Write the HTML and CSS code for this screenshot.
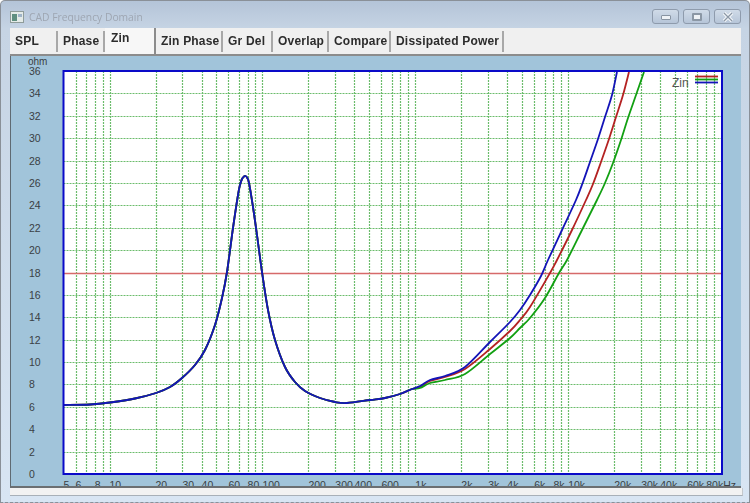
FILE: index.html
```html
<!DOCTYPE html>
<html>
    <head>
        <link rel="stylesheet" href="styles.css">
    </head>

    <body>
        <div class="window">
            <div class="titlebar">
                <svg class="app-icon" viewBox="0 0 14 12">
                    <rect x="0.5" y="0.5" width="13" height="11" fill="#e4ebe8" stroke="#8f9c9a"/>
                    <rect x="2" y="3" width="5" height="7" fill="#5f8f80"/>
                    <rect x="8" y="3" width="4" height="3" fill="#9fb4c8"/>
                </svg>
                <span class="title">CAD Frequency Domain</span>
                <div class="controls">
                    <div class="control"><span class="min-glyph"></span></div>
                    <div class="control"><span class="max-glyph"></span></div>
                    <div class="control close-glyph">
                        <svg viewBox="0 0 12 10" width="12" height="10">
                            <path d="M2 1 L10 9 M10 1 L2 9" stroke="#f4f7fa" stroke-width="3.4"/>
                            <path d="M2 1 L10 9 M10 1 L2 9" stroke="#8b97a5" stroke-width="1.2"/>
                        </svg>
                    </div>
                </div>
            </div>

            <div class="tabs">
                <div class="tab">SPL</div>
                <div class="tab">Phase</div>
                <div class="tab active">Zin</div>
                <div class="tab">Zin Phase</div>
                <div class="tab">Gr Del</div>
                <div class="tab">Overlap</div>
                <div class="tab">Compare</div>
                <div class="tab">Dissipated Power</div>
            </div>

            <div class="panel">
                <svg id="chart" class="chart" viewBox="11 56 731 430"></svg>
            </div>

            <div class="strip"></div>
        </div>

        <script src="chart.js"></script>
    </body>
</html>
```

FILE: styles.css
```css
* {
    box-sizing: border-box;
}

html, body {
    margin: 0;
    height: 100%;
    overflow: hidden;
}

.window {
    display: flex;
    flex-direction: column;
    width: 750px;
    height: 503px;
    padding: 0 8px 7px 9px;
    background: linear-gradient(#b4c4d8, #c6d4e4 28px, #d8e5f3);
    border: 1px solid #8a9098;
    border-bottom-style: dashed;
    border-radius: 5px 5px 0 0;
    font-family: "Liberation Sans", Arial, sans-serif;
}

.titlebar {
    display: flex;
    align-items: center;
    flex: none;
    height: 27px;
    padding-top: 4px;
}

.app-icon {
    width: 14px;
    height: 12px;
    margin-right: 5px;
}

.title {
    font-family: "Open Sans", sans-serif;
    font-size: 10.3px;
    color: #9ea6b2;
    filter: blur(0.3px);
}

.controls {
    display: flex;
    gap: 4px;
    margin-left: auto;
    margin-top: 0;
}

.control {
    display: flex;
    align-items: center;
    justify-content: center;
    width: 27px;
    height: 15px;
    border: 1px solid #8e9bac;
    border-radius: 3px;
    background: linear-gradient(#d0dbe8, #b6c5d8);
}

.min-glyph {
    width: 10px;
    height: 5px;
    margin-top: 2px;
    border: 1px solid #8894a2;
    border-radius: 1px;
    background: #eef2f6;
}

.max-glyph {
    width: 10px;
    height: 8px;
    border: 2px solid #8b97a5;
    border-radius: 1px;
    background: #eef2f6;
}

.tabs {
    display: grid;
    grid-template-columns: 48px 47px 51px 67px 50px 56px 62px 113px 1fr;
    flex: none;
    height: 28px;
    background: #f0f0f0;
    border-bottom: 2px solid #8c8c8c;
}

.tab {
    padding: 3px 0 0 5px;
    font-size: 12px;
    font-weight: bold;
    letter-spacing: 0.2px;
    color: #2c2c2c;
    border-right: 2px solid #a8a8a8;
    margin: 3px 0 2px;
    white-space: nowrap;
    filter: blur(0.3px);
}

.tab.active {
    margin: 0;
    padding: 3px 0 0 6px;
    background: #f7f7f7;
    border-right-color: #8c8c8c;
}

.panel {
    flex: none;
    height: 432px;
    background: #a1c4da;
    border-left: 1px solid #5f6a72;
    border-bottom: 2px solid #6b6f72;
}

.chart {
    display: block;
    width: 731px;
    height: 430px;
    font-family: "Liberation Sans", Arial, sans-serif;
    font-size: 10.5px;
    fill: #3a3f44;
}

.strip {
    flex: none;
    width: 733px;
    height: 8px;
    background: #f2f2f2;
    border-right: 1px solid #c4c8cc;
    border-bottom: 1px solid #a8b0b8;
}

.grid-line {
    stroke: #6cbc6c;
    stroke-width: 1.2;
    stroke-dasharray: 2 1;
}

.limit-line {
    stroke: #d66a6a;
    stroke-width: 1.5;
}

.plot-area {
    fill: #fff;
}

.plot-frame {
    fill: none;
    stroke: #0a0ac8;
    stroke-width: 2;
}

.curve {
    fill: none;
    stroke-width: 1.8;
    stroke-linejoin: round;
}

.curve-red {
    stroke: #b42222;
}

.curve-green {
    stroke: #12a012;
}

.curve-blue {
    stroke: #1414b8;
}

.legend-label {
    font-size: 12px;
    fill: #555;
}

.unit-label {
    font-size: 10px;
}
```

FILE: chart.js
```js
const svg = document.querySelector('#chart');

const plot = { left: 63.5, right: 722, top: 71, bottom: 474 };

// log frequency axis: 10Hz sits at 109.5 and one decade is 152.9px wide
const freqX = f => 109.5 + 152.9 * Math.log10(f / 10);
const ohmY = ohm => plot.bottom - ohm * (plot.bottom - plot.top) / 36;

function add(tag, attrs, text) {
    const el = document.createElementNS('http://www.w3.org/2000/svg', tag);
    Object.keys(attrs).forEach(key => el.setAttribute(key, attrs[key]));
    if (text) el.textContent = text;
    svg.appendChild(el);
    return el;
}

// catmull-rom through the points, as cubic segments
function smoothPath(points) {
    let d = 'M' + points[0].join(' ');
    for (let i = 0; i < points.length - 1; i++) {
        const p0 = points[i - 1] || points[i];
        const p1 = points[i];
        const p2 = points[i + 1];
        const p3 = points[i + 2] || p2;
        const c1 = [p1[0] + (p2[0] - p0[0]) / 6, p1[1] + (p2[1] - p0[1]) / 6];
        const c2 = [p2[0] - (p3[0] - p1[0]) / 6, p2[1] - (p3[1] - p1[1]) / 6];
        d += ' C' + c1.join(' ') + ' ' + c2.join(' ') + ' ' + p2.join(' ');
    }
    return d;
}

add('rect', {
    class: 'plot-area',
    x: plot.left,
    y: plot.top,
    width: plot.right - plot.left,
    height: plot.bottom - plot.top
});

// vertical grid
[1, 10, 100, 1000, 10000].forEach(decade => {
    for (let i = 1; i < 10; i++) {
        const f = decade * i;
        if (f <= 5 || f >= 100000) continue;
        const x = Math.round(freqX(f)) + 0.5;
        add('line', { class: 'grid-line', x1: x, x2: x, y1: plot.top, y2: plot.bottom });
    }
});

// horizontal grid and ohm labels
for (let ohm = 0; ohm <= 36; ohm += 2) {
    const y = Math.round(ohmY(ohm)) + 0.5;
    if (ohm > 0 && ohm < 36) {
        add('line', { class: 'grid-line', x1: plot.left, x2: plot.right, y1: y, y2: y });
    }
    add('text', { x: 29, y: ohmY(ohm) + 4 }, String(ohm));
}

add('text', { class: 'unit-label', x: 28, y: 65 }, 'ohm');

// limit line at 18 ohm
add('line', { class: 'limit-line', x1: plot.left, x2: plot.right, y1: 273.5, y2: 273.5 });

// frequency labels, cut off by the strip under the panel
const freqLabels = [
    [5, '5'], [6, '6'], [8, '8'], [10, '10'], [20, '20'], [30, '30'], [40, '40'], [60, '60'], [80, '80'],
    [100, '100'], [200, '200'], [300, '300'], [400, '400'], [600, '600'],
    [1000, '1k'], [2000, '2k'], [3000, '3k'], [4000, '4k'], [6000, '6k'], [8000, '8k'],
    [10000, '10k'], [20000, '20k'], [30000, '30k'], [40000, '40k'], [60000, '60k'], [80000, '80kHz']
];

freqLabels.forEach(label => {
    add('text', { x: freqX(label[0]), y: 489 }, label[1]);
});

// the three traces share one line up to about 800Hz
const shared = [
    [64, 405], [90, 404.5], [110, 402.5], [135, 398.5], [156, 393], [170, 387], [182, 378], [195, 365],
    [205, 350], [215, 325], [222, 298], [227, 272], [233, 228], [238, 195], [240, 185], [242, 179],
    [244, 176.5], [245.5, 176], [247, 177.5], [249, 183], [253, 207], [257, 235], [262, 272], [268, 310],
    [275, 340], [285, 367], [295, 382], [305, 391], [320, 398], [335, 402], [347, 403], [370, 400],
    [385, 398], [400, 394], [412, 389]
];

const traces = {
    red: [
        [420, 387], [430, 381], [445, 377], [465, 369], [490, 349], [510, 331], [520, 320], [530, 307],
        [550, 273], [557, 260], [572, 230], [586, 200], [593, 184], [601, 162], [609, 139], [616, 117], [623, 95], [629, 72]
    ],
    green: [
        [420, 388], [430, 383], [445, 380], [465, 374], [490, 354], [510, 338], [520, 328], [530, 318],
        [545, 298], [559, 273], [567, 260], [582, 230], [597, 200], [605, 183], [613, 163], [621, 140], [628, 118], [636, 95], [644, 72]
    ],
    blue: [
        [420, 386], [430, 380], [445, 376], [465, 367], [490, 342], [510, 322], [520, 310], [530, 295],
        [541, 276], [548, 260], [562, 230], [576, 200], [583, 182], [590, 162], [598, 139], [605, 117], [612, 95], [617, 72]
    ]
};

['red', 'green', 'blue'].forEach(name => {
    const points = shared.concat(traces[name]);
    add('path', { class: 'curve curve-' + name, d: smoothPath(points) });
});

add('rect', {
    class: 'plot-frame',
    x: plot.left,
    y: plot.top,
    width: plot.right - plot.left,
    height: plot.bottom - plot.top
});

// legend
add('text', { class: 'legend-label', x: 672, y: 87 }, 'Zin');
[['red', 76.5], ['green', 79.5], ['blue', 82.5]].forEach(item => {
    add('line', { class: 'curve curve-' + item[0], x1: 695, x2: 718, y1: item[1], y2: item[1] });
});
```
